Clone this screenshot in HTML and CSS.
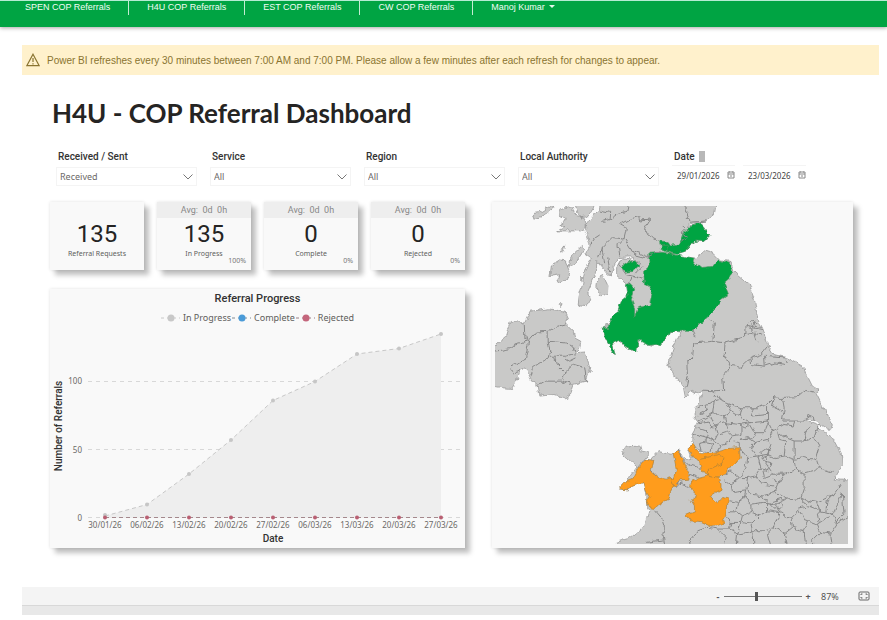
FILE: index.html
```html
<!DOCTYPE html>
<html lang="en">
<head>
<meta charset="utf-8">
<meta name="viewport" content="width=device-width, initial-scale=1">
<title>H4U - COP Referral Dashboard</title>
<link rel="stylesheet" href="styles.css">
</head>
<body>
<header class="topbar">
  <nav class="nav">
    <a href="#spen">SPEN COP Referrals</a>
    <a href="#h4u">H4U COP Referrals</a>
    <a href="#est">EST COP Referrals</a>
    <a href="#cw">CW COP Referrals</a>
    <a href="#account">Manoj Kumar <span class="caret"></span></a>
  </nav>
</header>

<main class="page">
  <p class="notice">
    <svg class="notice-icon" viewBox="0 0 14 14" aria-hidden="true"><path d="M7 1.2 13.2 12.7H.8Z"/><path d="M7 5v4M7 10.2v1.3"/></svg>
    <span>Power BI refreshes every 30 minutes between 7:00 AM and 7:00 PM. Please allow a few minutes after each refresh for changes to appear.</span>
  </p>

  <section class="report">
    <h1>H4U - COP Referral Dashboard</h1>

    <form class="filters">
      <div class="field">
        <label for="direction">Received / Sent</label>
        <div class="select"><select id="direction"><option>Received</option><option>Sent</option></select><svg viewBox="0 0 10 6" aria-hidden="true"><path d="M.5.5 5 5 9.5.5"/></svg></div>
      </div>
      <div class="field">
        <label for="service">Service</label>
        <div class="select"><select id="service"><option>All</option></select><svg viewBox="0 0 10 6" aria-hidden="true"><path d="M.5.5 5 5 9.5.5"/></svg></div>
      </div>
      <div class="field">
        <label for="region">Region</label>
        <div class="select"><select id="region"><option>All</option></select><svg viewBox="0 0 10 6" aria-hidden="true"><path d="M.5.5 5 5 9.5.5"/></svg></div>
      </div>
      <div class="field">
        <label for="authority">Local Authority</label>
        <div class="select"><select id="authority"><option>All</option></select><svg viewBox="0 0 10 6" aria-hidden="true"><path d="M.5.5 5 5 9.5.5"/></svg></div>
      </div>
      <div class="field">
        <label for="from" class="date-label">Date <span class="handle"></span></label>
        <div class="dates">
          <div class="date"><input id="from" type="text" value="29/01/2026"><svg viewBox="0 0 8 8" aria-hidden="true"><path d="M1 1h6v6H1ZM1 3h6M3 5h2M2.5.5v1M5.5.5v1"/></svg></div>
          <div class="date"><input type="text" value="23/03/2026" aria-label="End date"><svg viewBox="0 0 8 8" aria-hidden="true"><path d="M1 1h6v6H1ZM1 3h6M3 5h2M2.5.5v1M5.5.5v1"/></svg></div>
        </div>
      </div>
    </form>

    <div class="panels">
      <div class="left">
        <div class="cards">
          <article class="card"><p class="avg plain"></p><p class="num">135</p><p class="name">Referral Requests</p></article>
          <article class="card"><p class="avg">Avg:&nbsp; 0d&nbsp; 0h</p><p class="num">135</p><p class="name">In Progress</p><p class="pct">100%</p></article>
          <article class="card"><p class="avg">Avg:&nbsp; 0d&nbsp; 0h</p><p class="num">0</p><p class="name">Complete</p><p class="pct">0%</p></article>
          <article class="card"><p class="avg">Avg:&nbsp; 0d&nbsp; 0h</p><p class="num">0</p><p class="name">Rejected</p><p class="pct">0%</p></article>
        </div>

        <section class="card chart">
          <h2>Referral Progress</h2>
          <ul class="legend">
            <li><svg viewBox="0 0 20 8" aria-hidden="true"><path d="M0 4h3M6 4h9M18 4h1" stroke="#c8c8c8"/><circle cx="10" cy="4" r="3.500" fill="#c8c8c8"/></svg>In Progress</li>
            <li><svg viewBox="0 0 20 8" aria-hidden="true"><path d="M0 4h3M6 4h9M18 4h1" stroke="#808a92"/><circle cx="10" cy="4" r="3.500" fill="#4a9bd8"/></svg>Complete</li>
            <li><svg viewBox="0 0 20 8" aria-hidden="true"><path d="M0 4h3M6 4h9M18 4h1" stroke="#9a7f86"/><circle cx="10" cy="4" r="3.500" fill="#c4667c"/></svg>Rejected</li>
          </ul>
          <svg class="plot" viewBox="50 326 415 219" role="img" aria-label="Referrals by date">
            <g class="grid"><path d="M88 381.500H460M88 449.500H460M88 517.500H460"/></g>
            <path class="area" d="M105 516 147 504.500 189 474 231 440 273 400.500 315 381.500 357 354 399 348.500 441 334V518H105Z"/>
            <path class="line" d="M105 516 147 504.500 189 474 231 440 273 400.500 315 381.500 357 354 399 348.500 441 334"/>
            <path class="zero" d="M105 517.500H441"/>
            <g class="dots">
              <circle cx="105" cy="515" r="2"/><circle cx="147" cy="504.500" r="2"/><circle cx="189" cy="474" r="2"/><circle cx="231" cy="440" r="2"/><circle cx="273" cy="400.500" r="2"/><circle cx="315" cy="381.500" r="2"/><circle cx="357" cy="354" r="2"/><circle cx="399" cy="348.500" r="2"/><circle cx="441" cy="334" r="2"/>
            </g>
            <g class="zero-dots">
              <circle cx="105" cy="517.500" r="2"/><circle cx="147" cy="517.500" r="2"/><circle cx="189" cy="517.500" r="2"/><circle cx="231" cy="517.500" r="2"/><circle cx="273" cy="517.500" r="2"/><circle cx="315" cy="517.500" r="2"/><circle cx="357" cy="517.500" r="2"/><circle cx="399" cy="517.500" r="2"/><circle cx="441" cy="517.500" r="2"/>
            </g>
            <g class="ticks end"><text x="82" y="384">100</text><text x="82" y="453">50</text><text x="82" y="521">0</text></g>
            <g class="ticks mid"><text x="105" y="528">30/01/26</text><text x="147" y="528">06/02/26</text><text x="189" y="528">13/02/26</text><text x="231" y="528">20/02/26</text><text x="273" y="528">27/02/26</text><text x="315" y="528">06/03/26</text><text x="357" y="528">13/03/26</text><text x="399" y="528">20/03/26</text><text x="441" y="528">27/03/26</text></g>
            <text class="axis" x="273" y="542">Date</text>
            <text class="axis" transform="translate(62 426) rotate(-90)">Number of Referrals</text>
          </svg>
        </section>
      </div>

      <section class="card map">
        <svg viewBox="30 33 1062 1017" role="img" aria-label="Referrals by local authority">
          <defs>
            <filter id="coast" x="-5%" y="-5%" width="110%" height="110%">
              <feTurbulence type="fractalNoise" baseFrequency="0.05" numOctaves="2" seed="4"/>
              <feDisplacementMap in="SourceGraphic" scale="18" xChannelSelector="R" yChannelSelector="G"/>
            </filter>
          </defs>
          <g filter="url(#coast)">
            <g class="land">
              <!-- Great Britain -->
              <path d="M348 15 345 40 330 55 310 82 298 108 308 125 318 150 302 180 320 192 300 225 293 270 283 305 280 330 308 333 315 310 308 290 325 250 335 235 336 200 345 210 368 238 382 240 386 215 400 188 440 186 470 208 440 195 412 192 396 215 396 242 425 268 428 305 405 350 375 388 356 400 364 435 380 462 390 480 383 445 400 435 425 460 455 472 465 432 500 455 540 438 560 410 600 412 580 425 570 450 560 480 553 510 575 550 597 580 603 610 620 588 635 598 653 590 645 625 628 640 630 670 643 685 623 720 622 745 640 765 675 775 640 778 628 750 608 762 620 795 608 798 585 767 560 780 520 772 500 793 485 793 455 820 430 855 400 887 435 890 440 870 480 865 487 905 485 935 493 950 480 995 440 1030 395 1045 400 1070H1110V862L1050 855 1075 815 1072 780 1045 730 995 690 960 678 985 675 1040 708 1045 695 995 595 1005 587 985 575 955 515 910 490 870 480 850 450 837 405 820 370 810 310 795 270 750 230 740 200 705 195 685 175 660 168 635 190 585 185 545 176 575 178 600 172 615 150 635 138 658 140 676 122 655 95 645 84 610 95 620 86 665 78 687 60 694 15Z"/>
              <!-- Northern Ireland -->
              <path d="M15 470 65 425 80 380 105 378 118 388 135 350 190 342 240 352 248 370 242 388 265 410 270 430 288 440 285 460 265 475 300 472 312 500 318 520 305 560 265 570 255 600 240 610 210 600 165 605 160 575 140 560 120 520 105 530 95 560 80 582 50 580 15 572Z"/>
              <!-- Western isles -->
              <path d="M145 55 165 52 195 33 208 38 180 58 150 73ZM225 45 262 35 270 60 300 70 305 95 285 108 215 108 240 95 222 88 245 72 225 60ZM265 25 335 25 312 62 285 65ZM225 170 240 150 235 172ZM200 210 225 195 245 198 255 225 245 255 215 265 225 240 195 245ZM252 215 262 180 290 155 298 165 270 205ZM340 248 355 240 370 270 368 298 350 303 335 285ZM288 240 292 250 288 262ZM218 330 232 330 228 338Z"/>
              <!-- Anglesey -->
              <path d="M425 755 465 752 470 770 495 775 475 800 460 820 425 790 412 775Z"/>
            </g>
            <g class="green">
              <path d="M493 175 535 172 600 185 625 190 635 205 650 218 685 215 700 195 735 205 745 228 735 250 718 265 732 300 710 315 690 340 672 365 650 385 625 410 560 410 550 430 520 450 495 452 460 435 457 472 425 460 405 437 383 445 392 480 380 465 362 430 355 400 370 398 375 385 400 345 410 320 428 305 422 270 435 265 450 280 445 300 440 315 450 340 450 365 460 340 495 330 505 285 480 270 477 230 493 215Z"/>
              <path d="M410 215 430 200 455 198 462 213 445 230 425 232Z"/>
              <path d="M525 138 548 140 555 150 585 148 598 112 620 95 645 84 655 95 676 122 658 140 635 138 615 150 600 172 580 178 545 170 528 162Z"/>
              <path d="M525 150 548 148 552 176 570 178"/>
            </g>
            <g class="orange">
              <path d="M485 793 508 800 500 830 520 850 545 855 568 848 572 866 555 895 550 915 520 930 510 943 490 940 485 920 497 910 485 890 478 865 440 873 432 890 400 887 425 860 445 853 460 825Z"/>
              <path d="M566 776 583 768 600 810 615 840 613 855 590 857 570 880 562 860 575 825Z"/>
              <path d="M608 760 628 750 635 765 650 775 685 775 710 770 730 763 765 760 768 795 740 815 720 845 695 853 670 845 650 820 645 800 625 790Z"/>
              <path d="M620 862 640 853 670 845 705 853 710 870 710 885 680 905 700 927 715 910 732 913 727 965 715 985 685 997 655 983 615 980 603 965 630 953 630 935 620 918 637 905 618 888Z"/>
              <path d="M650 792 700 782 716 790 M716 790 710 810 672 828 672 845"/>
            </g>
            <g class="lines">
              <!-- Scotland -->
              <path d="M345 45 378 52 376 74 350 80M376 74 400 55 430 48 435 25M405 88 430 75 465 65 468 78 495 75 480 100 490 120 525 138M405 88 425 100 418 130 440 165 490 185 525 170M418 130 400 150 405 182M418 130 385 125 350 160 342 190M350 160 360 205M372 185 378 232M440 165 450 180 490 190M400 205 425 240 475 250M455 235 475 215M430 270 440 245 470 250M315 150 330 130 345 120M595 90 605 100 590 115 605 125 590 140M605 25 605 45 612 60 605 72 615 82 665 78"/>
              <!-- Northern Ireland -->
              <path d="M118 388 120 430 132 438 120 495 75 515 85 535 105 530M30 470 75 462 90 448 132 438M132 438 155 412 190 410 190 440 195 470 190 490 145 520 138 545M190 410 215 395 242 388M190 440 245 445 262 455 270 475M195 485 240 485 270 478M210 488 215 510 240 535 232 560 260 570M240 490 255 500 275 490M240 535 265 510 300 520 305 560M160 575 185 560 232 560"/>
              <!-- North of England -->
              <path d="M672 365 690 385 685 440 722 445 770 432 785 415 785 395 800 378 820 385M785 395 835 405M790 415 832 420M800 378 805 400 818 440M625 405 635 425M685 440 628 445 625 485 610 500 612 540M722 445 720 480 738 512 728 530 715 545 718 590 690 592M738 512 770 518 800 490 830 480 850 455M800 490 802 510 840 515 838 485 900 490 910 502M840 515 870 505 905 510M810 380 812 395 830 398"/>
              <path d="M690 592 705 615 730 625 770 640 820 640 850 630 870 610 895 612 900 640 895 680 960 680M895 612 935 610 965 585 990 590M653 590 690 592M870 610 865 635 895 650M970 680 975 662 988 668 990 680M603 585 612 545M640 640 665 630 690 620 705 615M665 630 670 650 640 665M690 620 685 655 670 665 640 680M730 625 740 650 720 665 685 655M770 640 765 665 740 650M800 640 805 665 850 660 850 635M765 665 800 685 850 680 850 660M850 680 865 710 900 690 930 695 935 680M640 685 670 680 680 700 720 685 765 690 800 685M680 665 690 690 700 720 690 740 660 730 625 720M640 700 670 710 665 740 645 745 650 770M690 740 710 755 700 775M700 720 730 710 745 725 730 745 710 750M745 725 770 720 770 690M765 690 780 700 795 690 810 715 800 730 770 735M745 740 765 745 765 760M660 745 685 750 680 770M720 665 730 700M850 690 840 715 810 715"/>
              <!-- Midlands -->
              <path d="M770 735 790 730 812 745 850 735 865 710M765 760 790 790 785 820 765 850 740 830 722 838M790 790 820 785 850 780 870 790 900 785 930 795 930 740 905 730 880 710M930 740 960 740 990 730 1000 700 1010 690M990 730 1005 755 995 790 1005 820 1050 835M930 795 960 790 995 800M930 795 935 825 960 840 995 830 1005 820M935 825 900 840 880 870 870 895 905 915 950 910 960 880 960 840M950 910 975 920 1000 925 1050 900 1070 870M1000 925 1010 950 1045 960 1075 900M1010 950 960 930 950 910M850 780 845 810 865 840 900 840M820 785 830 820 815 845 835 870 870 875M815 845 790 850 765 850M790 850 785 885 800 900 835 905 870 895M765 850 740 870 720 860M740 870 745 895 785 890M835 905 850 925 875 930 905 915M875 930 885 955 920 970 945 945 985 935M945 945 960 975 1000 990 1045 960M920 970 925 1000 900 1020 870 1000 885 955M925 1000 960 1010 975 980M960 1010 965 1060M1000 990 1010 1015 1040 1020 1060 990 1090 970M1040 1020 1045 1060M1060 990 1045 960M870 1000 850 1020 860 1060M900 1020 910 1055M1010 1015 985 1040 990 1060"/>
              <path d="M737 920 760 925 780 910 800 930 835 925 850 925M780 910 785 890M760 925 755 950 735 950M755 950 775 965 800 955 800 930M800 955 825 965 850 950 850 925M775 965 770 985 740 985 728 970M770 985 800 990 825 965M800 990 805 1010 840 1010 870 1000M850 950 885 955M740 985 735 1005 760 1020 770 985M735 1005 700 1005 670 1000 640 1010 615 1040 620 1060M760 1020 790 1015 805 1010M760 1020 755 1060M805 1010 810 1060M700 1005 725 1030 720 1060M835 790 850 785 855 770 840 765 830 775 840 800 860 805 850 830 835 825 840 845M820 785 800 760 812 745M850 780 860 750 850 735M880 870 870 850M865 840 840 850M860 925 890 915 895 940 870 945ZM1075 900 1080 960 1055 985M880 710 885 735 905 740 900 785M960 740 965 710 985 690M1025 950 1030 920 1050 900M1005 985 1000 960 1010 950"/>
              <!-- Wales -->
              <path d="M513 950 530 970 540 1000 535 1020 540 1050M485 1045 535 1038M500 830 515 850M585 768 590 790 610 810 650 822M615 840 640 850M570 880 590 870 615 880M572 866 600 862"/>
            </g>
          </g>
        </svg>
      </section>
    </div>
  </section>

  <footer class="status">
    <div class="zoom">
      <button type="button" aria-label="Zoom out">-</button>
      <input type="range" min="10" max="195" value="87" aria-label="Zoom">
      <button type="button" aria-label="Zoom in">+</button>
      <span class="level">87%</span>
      <button type="button" class="fit" aria-label="Fit to page"><svg viewBox="0 0 12 10" aria-hidden="true"><rect x="1" y="1" width="10" height="8" rx="1"/><path d="M3 4V3h1.500M7.500 3H9v1M9 6v1H7.500M4.500 7H3V6"/></svg></button>
    </div>
    <div class="scroll"></div>
  </footer>
</main>
</body>
</html>
```
FILE: styles.css
```css
* { box-sizing: border-box; }
body {
  margin: 0;
  background: #fff;
  color: #252423;
  font-family: "Liberation Sans", Arial, sans-serif;
}
h1, h2, p, ul { margin: 0; padding: 0; }
svg { display: block; }
button, input, select { font: inherit; color: inherit; border: 0; background: none; padding: 0; margin: 0; }

.topbar {
  height: 27px;
  background: #00a443;
  border-top: 1px solid #b4ecd2;
  box-shadow: 0 1px 4px rgba(0, 0, 0, .35);
}
.nav { display: flex; padding-left: 7px; }
.nav a {
  display: flex;
  align-items: center;
  height: 14px;
  padding: 0 18px 3px 18px;
  border-right: 1px solid #c4ecd2;
  color: #f2fcf5;
  font-size: 9px;
  line-height: 10px;
  text-decoration: none;
  white-space: nowrap;
}
.nav a:last-child { border: 0; }
.caret { margin-left: 4px; border: 3px solid transparent; border-top-color: #e4f8ea; border-bottom: 0; }

.page { padding: 18px 8px 0 22px; }
.notice {
  display: flex;
  align-items: center;
  gap: 7px;
  height: 30px;
  padding: 0 4px;
  background: #fff1cc;
  color: #8a7430;
  font-size: 10px;
}
.notice-icon { width: 14px; height: 14px; fill: none; stroke: #8a7430; stroke-width: 1.200; }

.report { padding: 22px 26px 0 28px; font-family: "Noto Sans", sans-serif; }
h1 { padding-left: 2px; font: 700 26px/32px Lato, sans-serif; }

.filters {
  display: grid;
  grid-template-columns: repeat(4, minmax(0, 141fr)) minmax(0, 139fr);
  gap: 13px;
  padding: 22px 42px 0 6px;
}
.field label { display: block; padding-left: 2px; font: 500 10px/12px Roboto, sans-serif; color: #333; }
.select { position: relative; margin-top: 4px; height: 19px; border: 1px solid #f4f4f4; }
.select select { display: block; width: 100%; height: 17px; padding-left: 3px; appearance: none; color: #6b6967; font-size: 9px; line-height: 17px; }
.select svg { position: absolute; right: 3px; top: 6px; width: 10px; height: 6px; fill: none; stroke: #777; pointer-events: none; }
.field .date-label { display: flex; gap: 4px; }
.handle { width: 6px; height: 11px; background: #b8b8b8; }
.dates { display: flex; gap: 8px; padding-top: 2px; }
.date { display: flex; flex: none; align-items: center; height: 19px; border-top: 1px solid #f4f4f4; padding-left: 5px; }
.date input { width: 50px; color: #444; font-size: 8px; }
.date svg { width: 8px; height: 8px; fill: none; stroke: #888; }

.panels { display: grid; grid-template-columns: 415fr 361fr; gap: 27px; padding-top: 16px; }
.cards { display: grid; grid-template-columns: repeat(4, 1fr); gap: 13px; }
.card { background: #f9f9f9; box-shadow: 0 0 3px rgba(0, 0, 0, .12), 5px 5px 5px rgba(0, 0, 0, .25); }
.cards .card { height: 68px; text-align: center; }
.avg { height: 16px; background: #eee; color: #888; font: 9px/16px Roboto, sans-serif; }
.avg.plain { background: none; }
.num { font: 24px/32px Roboto, sans-serif; }
.name { color: #605e5c; font-size: 7px; line-height: 7px; }
.pct { padding-right: 5px; color: #777; text-align: right; font-size: 7px; line-height: 7px; }

.chart { margin-top: 19px; padding-bottom: 3px; }
.chart h2 { padding-top: 2px; text-align: center; color: #333; font: 500 11px/16px Roboto, sans-serif; }
.legend { display: flex; justify-content: center; gap: 1px; height: 19px; padding-top: 2px; list-style: none; color: #605e5c; font-size: 9px; line-height: 12px; }
.legend li { display: flex; align-items: center; gap: 2px; }
.legend svg { width: 20px; height: 8px; }
.plot { width: 100%; }
.grid path { stroke: #d8d8d8; stroke-dasharray: 4 4; }
.area { fill: #eee; }
.line { fill: none; stroke: #c8c8c8; stroke-dasharray: 4 3; }
.zero { stroke: #a4888c; stroke-dasharray: 4 3; }
.dots { fill: #c6c6c6; }
.zero-dots { fill: #b95f72; }
.ticks { fill: #6b6967; font-size: 8px; }
.end { text-anchor: end; }
.mid { text-anchor: middle; }
.axis { fill: #333; font: 500 10px Roboto, sans-serif; text-anchor: middle; }

.map { padding: 4px 5px 3px 3px; }
.land path { fill: #c9c9c8; stroke: #8c8c8c; stroke-width: 2; }
.green path { fill: #00a443; stroke: #4b9560; stroke-width: 2; }
.orange path { fill: #ff9c1a; stroke: #a8803e; stroke-width: 2; }
.green path:last-child, .orange path:last-child, .lines path { fill: none; }
.lines path { stroke: #888; stroke-width: 3; }

.status { margin-top: 39px; }
.zoom { display: flex; align-items: center; justify-content: flex-end; height: 19px; padding-right: 9px; background: #f4f4f4; border-bottom: 1px solid #d8d8d8; color: #555; font: 9px "Noto Sans", sans-serif; }
.zoom button { width: 12px; font-weight: 700; }
.zoom input { width: 78px; height: 10px; appearance: none; background: linear-gradient(#777, #777) center / 100% 1px no-repeat; }
.zoom input::-webkit-slider-thumb { appearance: none; width: 3px; height: 9px; background: #555; }
.level { width: 30px; padding-left: 7px; }
.zoom .fit { margin-left: 14px; }
.fit svg { width: 12px; height: 10px; fill: none; stroke: #666; }
.scroll { height: 9px; background: #e8e8e8; }
```
